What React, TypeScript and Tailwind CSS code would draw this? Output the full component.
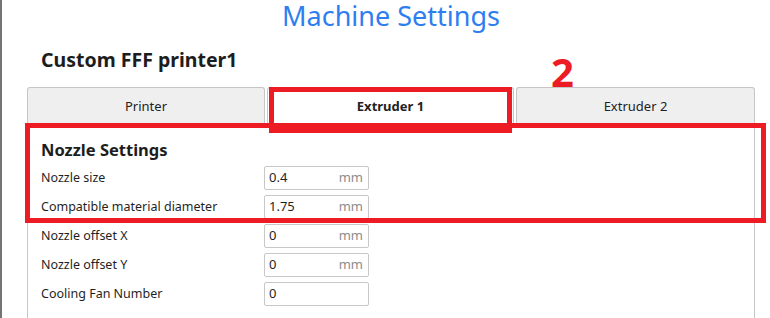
import React from "react";

const rows = [
  {label: "Nozzle size", value: "0.4", unit: "mm"},
  {label: "Compatible material diameter", value: "1.75", unit: "mm"},
  {label: "Nozzle offset X", value: "0", unit: "mm"},
  {label: "Nozzle offset Y", value: "0", unit: "mm"},
  {label: "Cooling Fan Number", value: "0", unit: ""},
];

function SettingRow({label, value, unit}: {label: string; value: string; unit: string}) {
  return (
    <div className="flex items-center h-[24px]">
      <div className="w-[223px] text-[12.5px] text-[#1f1f1f]">{label}</div>
      <div className="w-[105px] h-[24px] border border-[#c8c8c8] rounded-[2px] flex items-center justify-between pl-[4px] pr-[5px] bg-white">
        <span className="text-[13px] text-[#1f1f1f]">{value}</span>
        <span className="text-[13px] text-[#8c8c8c]">{unit}</span>
      </div>
    </div>
  );
}

export default function App() {
  return (
    <div
      className="relative w-[770px] h-[318px] overflow-hidden bg-white flex"
      style={{fontFamily: '"Noto Sans", "Open Sans", sans-serif'}}
    >
      <div className="w-[2px] h-full bg-[#747474]" />
      <div className="ml-[25px] w-[728px] flex flex-col">
        <h1 className="text-center text-[27px] leading-[32px] text-[#2f7ef0]">Machine Settings</h1>
        <h2 className="mt-[15px] pl-[14px] text-[19.5px] leading-[26px] font-bold text-[#1d1d1d]">Custom FFF printer1</h2>

        <div className="mt-[14px] flex gap-[2px] h-[37px]">
          <div className="w-[238px] bg-[#efefef] border border-b-0 border-[#c6c6c6] rounded-t-[3px] flex items-center justify-center pt-[1px] text-[13px] text-[#222]">
            Printer
          </div>
          <div className="flex-1 bg-white border border-b-0 border-[#c6c6c6] rounded-t-[3px] flex items-center justify-center pt-[1px] text-[13px] font-bold text-[#222]">
            Extruder 1
          </div>
          <div className="w-[239px] bg-[#efefef] border border-b-0 border-[#c6c6c6] rounded-t-[3px] flex items-center justify-center pt-[1px] text-[13px] text-[#222]">
            Extruder 2
          </div>
        </div>

        <div className="flex-1 border-x border-t border-[#c6c6c6] pl-[13px] pt-[13px]">
          <h3 className="text-[16.5px] leading-[24px] font-bold text-[#1d1d1d]">Nozzle Settings</h3>
          <div className="mt-[4px] flex flex-col gap-[5px]">
            {rows.map((r) => (
              <SettingRow key={r.label} {...r} />
            ))}
          </div>
        </div>
      </div>

      {/* annotations */}
      <div className="absolute left-[551px] top-[50px] text-[40px] leading-[44px] font-bold text-[#ed1c24]">2</div>
      <div className="absolute left-[269px] top-[87px] w-[243px] h-[46px] border-[5px] border-[#ed1c24]" />
      <div className="absolute left-[25px] top-[123px] w-[741px] h-[100px] border-[5px] border-[#ed1c24]" />
    </div>
  );
}
